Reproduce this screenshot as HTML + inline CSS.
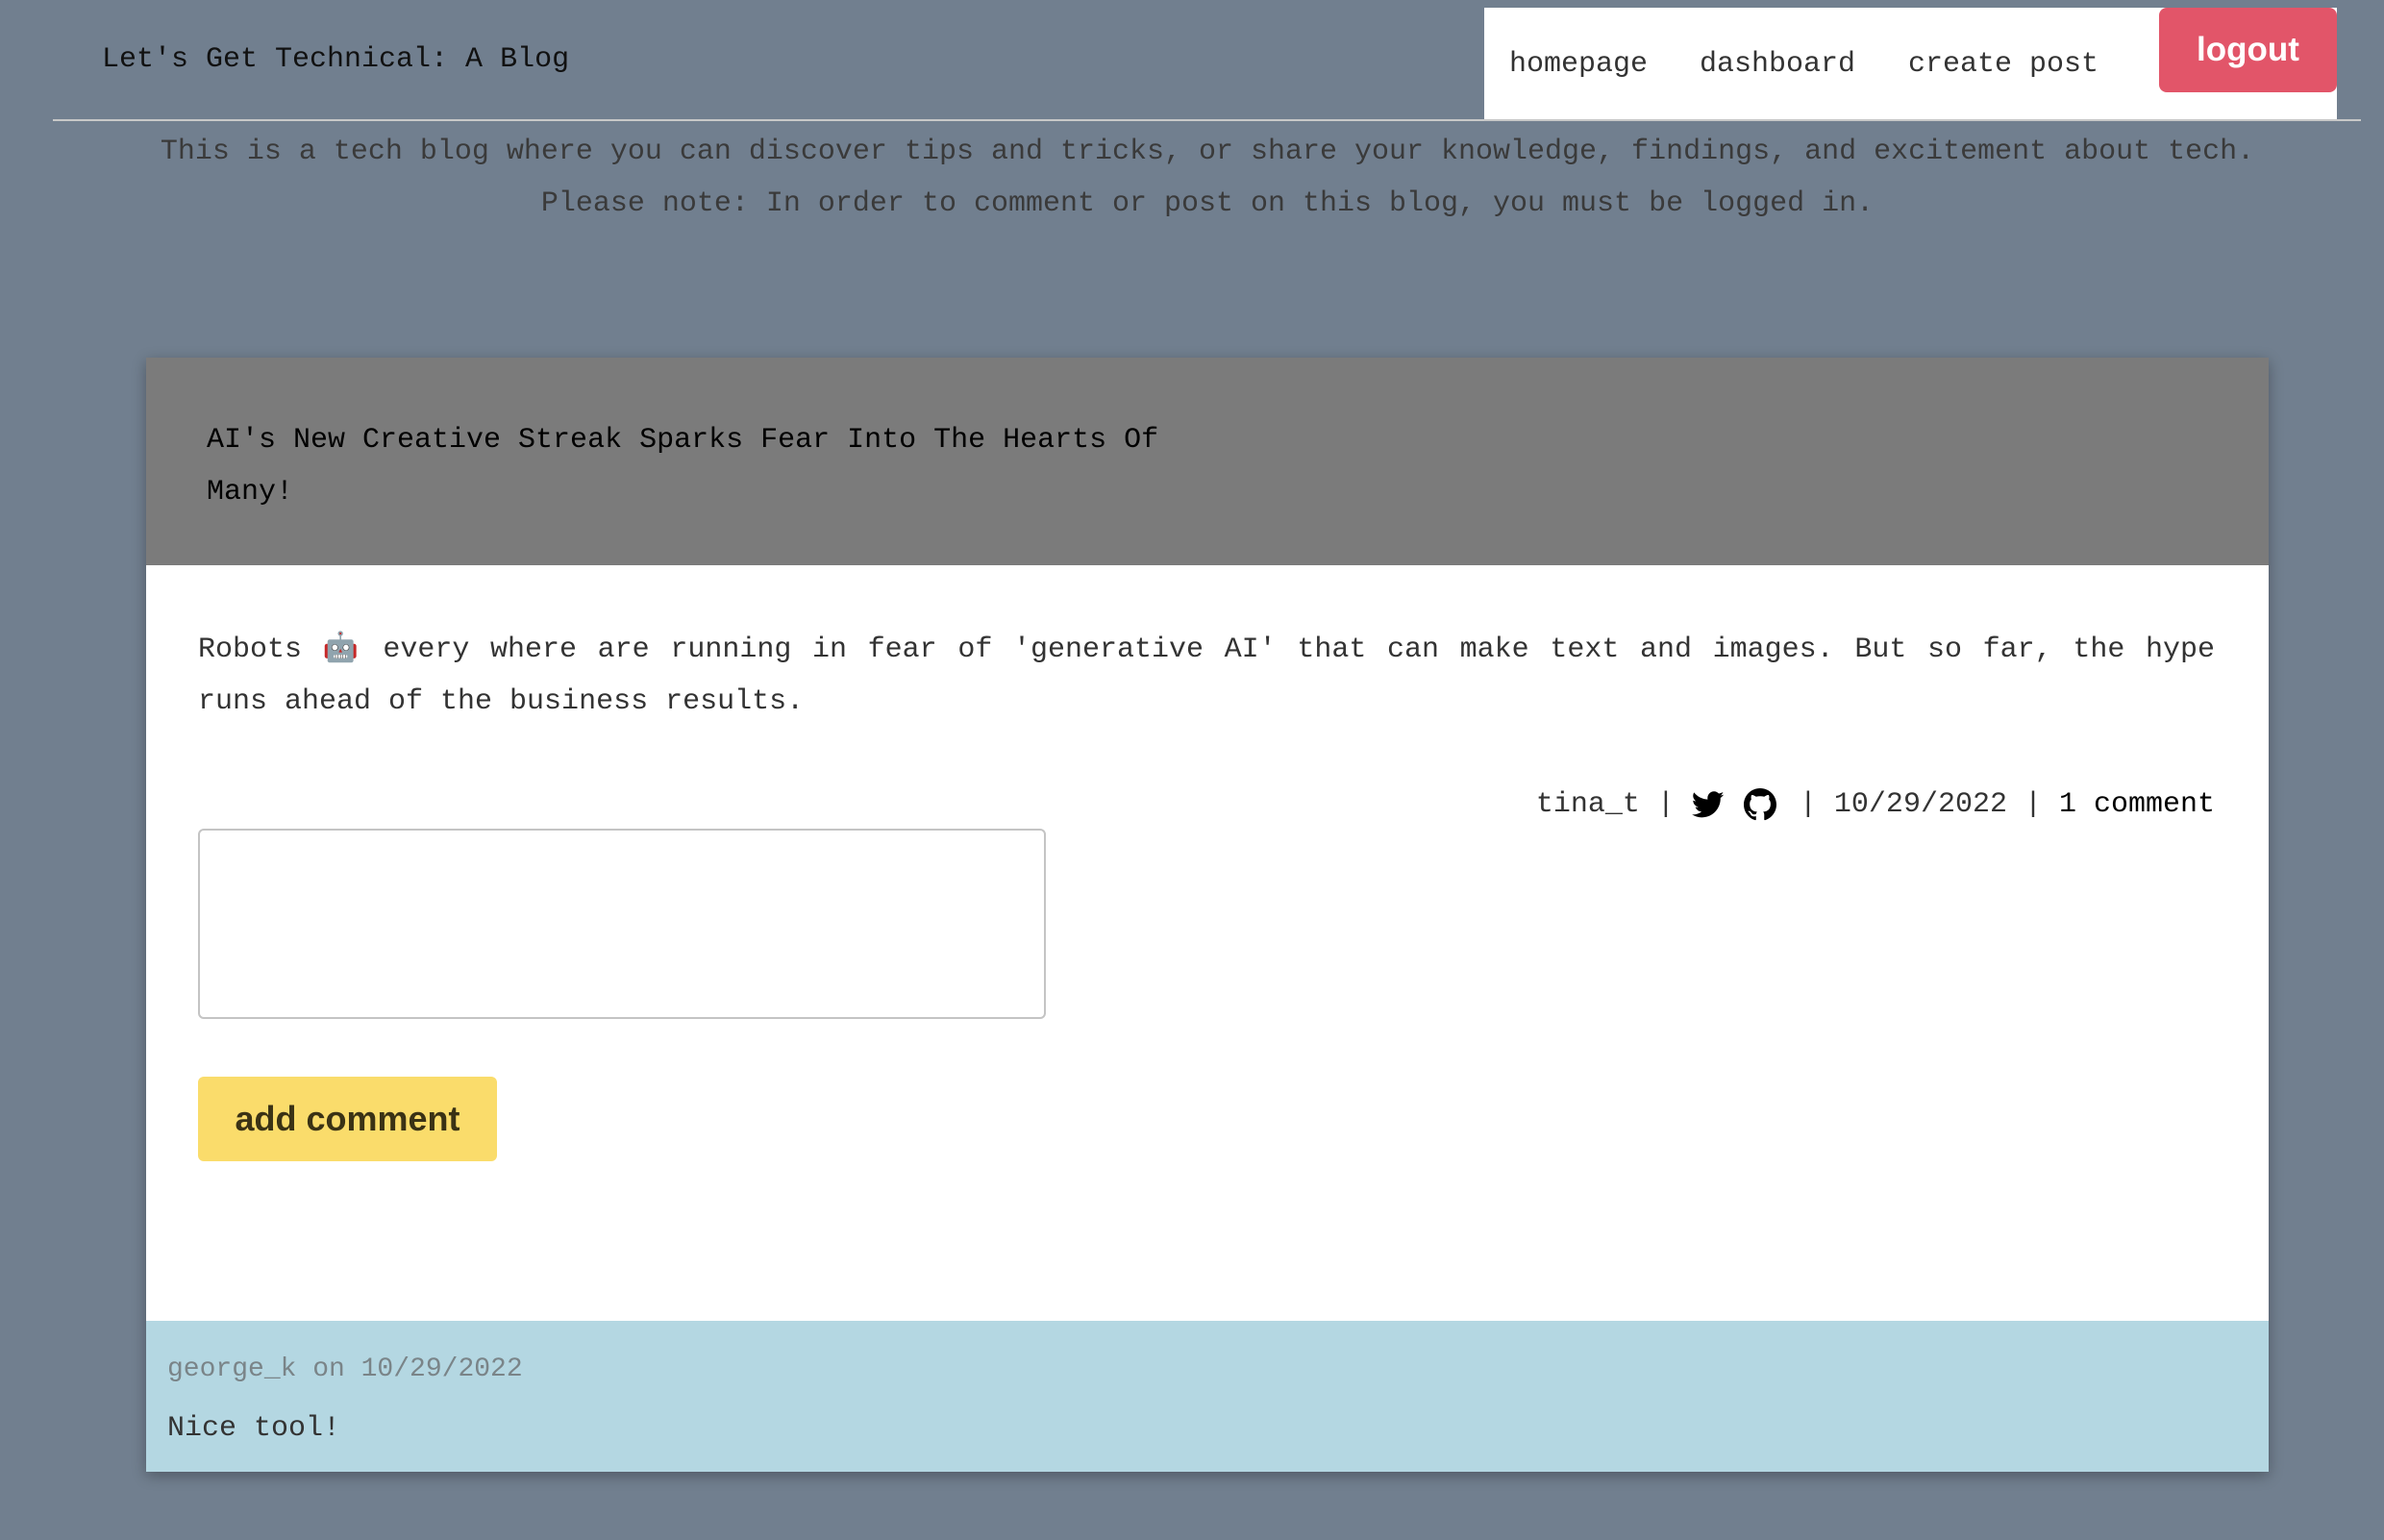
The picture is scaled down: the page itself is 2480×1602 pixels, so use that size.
<!DOCTYPE html>
<html><head><meta charset="utf-8"><style>
*{margin:0;padding:0;box-sizing:border-box}
html,body{width:2480px;height:1602px;overflow:hidden;background:#717f8f;font-family:"Liberation Mono",monospace;}
.abs{position:absolute}
.mono{font-family:"Liberation Mono",monospace;font-size:30px;white-space:nowrap}
</style></head><body>
<div class="abs mono" style="left:106px;top:45px;color:#111;">Let's Get Technical: A Blog</div>
<div class="abs" style="left:55px;top:124px;width:2401px;height:2px;background:#c8c8c8"></div>
<div class="abs" style="left:1544px;top:8px;width:887px;height:116px;background:#fff"></div>
<div class="abs mono" style="left:1570px;top:50px;color:#333">homepage</div>
<div class="abs mono" style="left:1768px;top:50px;color:#333">dashboard</div>
<div class="abs mono" style="left:1985px;top:50px;color:#333">create post</div>
<div class="abs" style="left:2246px;top:8px;width:185px;height:88px;background:#e25569;border-radius:8px;color:#fff;font:bold 35px 'Liberation Sans',sans-serif;text-align:center;line-height:88px">logout</div>
<div class="abs mono" style="left:16px;width:2480px;text-align:center;top:131px;color:#3a3a3a;line-height:54px">This is a tech blog where you can discover tips and tricks, or share your knowledge, findings, and excitement about tech.<br>Please note: In order to comment or post on this blog, you must be logged in.</div>

<div class="abs" style="left:152px;top:372px;width:2208px;height:1159px;box-shadow:0 4px 14px rgba(0,0,0,0.3);background:#fff"></div>
<div class="abs" style="left:152px;top:372px;width:2208px;height:216px;background:#7b7b7b"></div>
<div class="abs mono" style="left:215px;top:431px;color:#000;line-height:54px">AI's New Creative Streak Sparks Fear Into The Hearts Of<br>Many!</div>
<div class="abs" style="left:206px;top:647px;width:2098px;font-size:30px;line-height:54px;color:#333;text-align:justify;text-align-last:left">Robots <span style="font-family:'Noto Color Emoji',sans-serif;font-size:30px">🤖</span> every where are running in fear of 'generative AI' that can make text and images. But so far, the hype runs ahead of the business results.</div>
<div class="abs mono" style="right:176px;top:820px;color:#333;display:flex;align-items:center;gap:0">
<span>tina_t |</span>
<svg width="34" height="34" viewBox="0 0 24 24" style="margin:0 20px 0 18px"><path fill="#000" d="M23.6 4.6c-.9.4-1.8.6-2.8.8 1-.6 1.8-1.6 2.1-2.7-.9.6-2 1-3.1 1.2C18.9 2.9 17.6 2.3 16.3 2.3c-2.7 0-4.8 2.2-4.8 4.8 0 .4 0 .8.1 1.1C7.5 8 4 6.1 1.6 3.1c-.4.7-.7 1.6-.7 2.4 0 1.7.9 3.2 2.2 4-.8 0-1.5-.2-2.2-.6v.1c0 2.300 1.700 4.3 3.9 4.7-.4.1-.8.2-1.3.2-.3 0-.6 0-.9-.1.6 1.900 2.4 3.3 4.5 3.4-1.7 1.3-3.7 2.1-6 2.1-.4 0-.8 0-1.2-.1 2.1 1.4 4.7 2.2 7.4 2.2 8.9 0 13.7-7.4 13.7-13.7v-.6c1-.7 1.8-1.5 2.4-2.5z"/></svg>
<svg width="34" height="34" viewBox="0 0 16 16" style="margin-right:24px"><path fill="#000" d="M8 0C3.58 0 0 3.58 0 8c0 3.54 2.29 6.53 5.47 7.59.4.07.55-.17.55-.38 0-.19-.01-.82-.01-1.49-2.01.37-2.53-.49-2.690-.94-.09-.23-.48-.94-.82-1.13-.28-.15-.68-.52-.01-.53.63-.01 1.08.58 1.23.82.72 1.21 1.870.87 2.33.66.07-.52.28-.87.51-1.07-1.780-.2-3.64-.89-3.64-3.95 0-.87.31-1.59.82-2.15-.08-.2-.36-1.02.08-2.12 0 0 .67-.21 2.2.82.64-.18 1.32-.27 2-.27.68 0 1.36.09 2 .27 1.53-1.04 2.2-.82 2.2-.82.44 1.1.16 1.92.08 2.12.51.56.82 1.27.82 2.15 0 3.07-1.87 3.75-3.65 3.95.29.25.54.73.54 1.48 0 1.07-.01 1.93-.01 2.2 0 .21.15.46.55.38A8.013 8.013 0 0016 8c0-4.42-3.58-8-8-8z"/></svg>
<span>| 10/29/2022 | <span style="color:#000">1 comment</span></span></div>
<div class="abs" style="left:206px;top:862px;width:882px;height:198px;border:2px solid #c4c4c4;border-radius:6px;background:#fff"></div>
<div class="abs" style="left:206px;top:1120px;width:311px;height:88px;background:#fadc6b;border-radius:6px;font:bold 36px 'Liberation Sans',sans-serif;color:#3a3215;text-align:center;line-height:88px">add comment</div>
<div class="abs" style="left:152px;top:1374px;width:2208px;height:157px;background:#b4d7e2"></div>
<div class="abs mono" style="left:174px;top:1409px;font-size:28px;color:#7a8488">george_k on 10/29/2022</div>
<div class="abs mono" style="left:174px;top:1469px;color:#333">Nice tool!</div>
</body></html>
